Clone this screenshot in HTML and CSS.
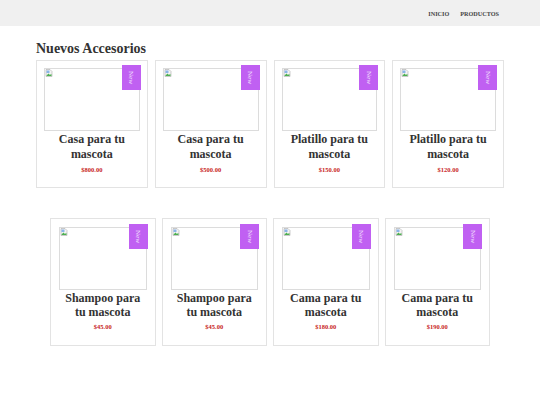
FILE: index.html
```html
<!DOCTYPE html>
<html lang="es">
<head>
    <meta charset="UTF-8" />
    <title>Nuevos Accesorios</title>
    <link rel="stylesheet" href="styles.css">
</head>
<body>

    <header class="topbar">
        <nav class="menu">
            <a href="#">Inicio</a>
            <a href="#">Productos</a>
        </nav>
    </header>

    <main class="contenido">
        <h1>Nuevos Accesorios</h1>

        <!-- Primera fila -->
        <div class="fila">
            <div class="tarjeta">
                <div class="foto">
                    <svg class="roto" viewBox="0 0 16 16"><path d="M2 1h8l4 4v10H2z" fill="#f4f4f4" stroke="#9a9a9a" stroke-width="1"/><path d="M3 13l4-4 3 3 2-2 1 1v3H3z" fill="#4caf50"/><rect x="3" y="3" width="6" height="5" fill="#8ab4e8"/></svg>
                </div>
                <span class="nuevo">New</span>
                <h2>Casa para tu mascota</h2>
                <p class="precio">$800.00</p>
            </div>
            <div class="tarjeta">
                <div class="foto">
                    <svg class="roto" viewBox="0 0 16 16"><path d="M2 1h8l4 4v10H2z" fill="#f4f4f4" stroke="#9a9a9a" stroke-width="1"/><path d="M3 13l4-4 3 3 2-2 1 1v3H3z" fill="#4caf50"/><rect x="3" y="3" width="6" height="5" fill="#8ab4e8"/></svg>
                </div>
                <span class="nuevo">New</span>
                <h2>Casa para tu mascota</h2>
                <p class="precio">$500.00</p>
            </div>
            <div class="tarjeta">
                <div class="foto">
                    <svg class="roto" viewBox="0 0 16 16"><path d="M2 1h8l4 4v10H2z" fill="#f4f4f4" stroke="#9a9a9a" stroke-width="1"/><path d="M3 13l4-4 3 3 2-2 1 1v3H3z" fill="#4caf50"/><rect x="3" y="3" width="6" height="5" fill="#8ab4e8"/></svg>
                </div>
                <span class="nuevo">New</span>
                <h2>Platillo para tu mascota</h2>
                <p class="precio">$150.00</p>
            </div>
            <div class="tarjeta">
                <div class="foto">
                    <svg class="roto" viewBox="0 0 16 16"><path d="M2 1h8l4 4v10H2z" fill="#f4f4f4" stroke="#9a9a9a" stroke-width="1"/><path d="M3 13l4-4 3 3 2-2 1 1v3H3z" fill="#4caf50"/><rect x="3" y="3" width="6" height="5" fill="#8ab4e8"/></svg>
                </div>
                <span class="nuevo">New</span>
                <h2>Platillo para tu mascota</h2>
                <p class="precio">$120.00</p>
            </div>
        </div>

        <!-- Segunda fila -->
        <div class="fila fila-chica">
            <div class="tarjeta">
                <div class="foto">
                    <svg class="roto" viewBox="0 0 16 16"><path d="M2 1h8l4 4v10H2z" fill="#f4f4f4" stroke="#9a9a9a" stroke-width="1"/><path d="M3 13l4-4 3 3 2-2 1 1v3H3z" fill="#4caf50"/><rect x="3" y="3" width="6" height="5" fill="#8ab4e8"/></svg>
                </div>
                <span class="nuevo">New</span>
                <h2>Shampoo para tu mascota</h2>
                <p class="precio">$45.00</p>
            </div>
            <div class="tarjeta">
                <div class="foto">
                    <svg class="roto" viewBox="0 0 16 16"><path d="M2 1h8l4 4v10H2z" fill="#f4f4f4" stroke="#9a9a9a" stroke-width="1"/><path d="M3 13l4-4 3 3 2-2 1 1v3H3z" fill="#4caf50"/><rect x="3" y="3" width="6" height="5" fill="#8ab4e8"/></svg>
                </div>
                <span class="nuevo">New</span>
                <h2>Shampoo para tu mascota</h2>
                <p class="precio">$45.00</p>
            </div>
            <div class="tarjeta">
                <div class="foto">
                    <svg class="roto" viewBox="0 0 16 16"><path d="M2 1h8l4 4v10H2z" fill="#f4f4f4" stroke="#9a9a9a" stroke-width="1"/><path d="M3 13l4-4 3 3 2-2 1 1v3H3z" fill="#4caf50"/><rect x="3" y="3" width="6" height="5" fill="#8ab4e8"/></svg>
                </div>
                <span class="nuevo">New</span>
                <h2>Cama para tu mascota</h2>
                <p class="precio">$180.00</p>
            </div>
            <div class="tarjeta">
                <div class="foto">
                    <svg class="roto" viewBox="0 0 16 16"><path d="M2 1h8l4 4v10H2z" fill="#f4f4f4" stroke="#9a9a9a" stroke-width="1"/><path d="M3 13l4-4 3 3 2-2 1 1v3H3z" fill="#4caf50"/><rect x="3" y="3" width="6" height="5" fill="#8ab4e8"/></svg>
                </div>
                <span class="nuevo">New</span>
                <h2>Cama para tu mascota</h2>
                <p class="precio">$190.00</p>
            </div>
        </div>
    </main>

</body>
</html>
```

FILE: styles.css
```css
* {
    margin: 0;
    padding: 0;
    box-sizing: border-box;
    font-family: "Liberation Serif", "Times New Roman", serif;
}

body {
    background: #fff;
    color: #333;
}

/* Barra superior */
.topbar {
    background-color: #f0f0f0;
    height: 26px;
    display: flex;
    justify-content: flex-end;
    align-items: center;
    padding-right: 41px;
}

.menu {
    display: flex;
    gap: 11px;
}

.menu a {
    color: #444;
    text-decoration: none;
    text-transform: uppercase;
    font-size: 6.2px;
    font-weight: bold;
}

.contenido {
    padding: 0 36px;
}

h1 {
    font-size: 14px;
    line-height: 16px;
    margin-top: 15px;
    margin-bottom: 3px;
    color: #333;
}

.fila {
    display: flex;
    gap: 7px;
}

.tarjeta {
    position: relative;
    flex: 1;
    border: 1px solid #e3e3e3;
    padding: 7px 7px 12px;
    text-align: center;
}

.foto {
    height: 63px;
    border: 1px solid #dcdcdc;
    text-align: left;
}

.roto {
    display: block;
    width: 8px;
    height: 8px;
}

.nuevo {
    position: absolute;
    top: 4px;
    right: 6px;
    width: 19px;
    height: 25px;
    background-color: #c060f2;
    color: #f4e6fd;
    font-size: 7px;
    writing-mode: vertical-rl;
    display: flex;
    align-items: center;
    justify-content: center;
}

h2 {
    font-size: 12px;
    line-height: 15px;
    margin-top: 1px;
    color: #333;
}

.precio {
    font-size: 6.5px;
    line-height: 10px;
    margin-top: 3px;
    font-weight: bold;
    color: #c81e1e;
}

/* Segunda fila: tarjetas mas angostas y centradas */
.fila-chica {
    justify-content: center;
    gap: 6px;
    margin-top: 30px;
}

.fila-chica .tarjeta {
    flex: 0 0 105.5px;
    padding: 8px 8px 13px;
}

.fila-chica .nuevo {
    top: 5px;
    right: 7px;
}

.fila-chica h2 {
    line-height: 14px;
}
```
